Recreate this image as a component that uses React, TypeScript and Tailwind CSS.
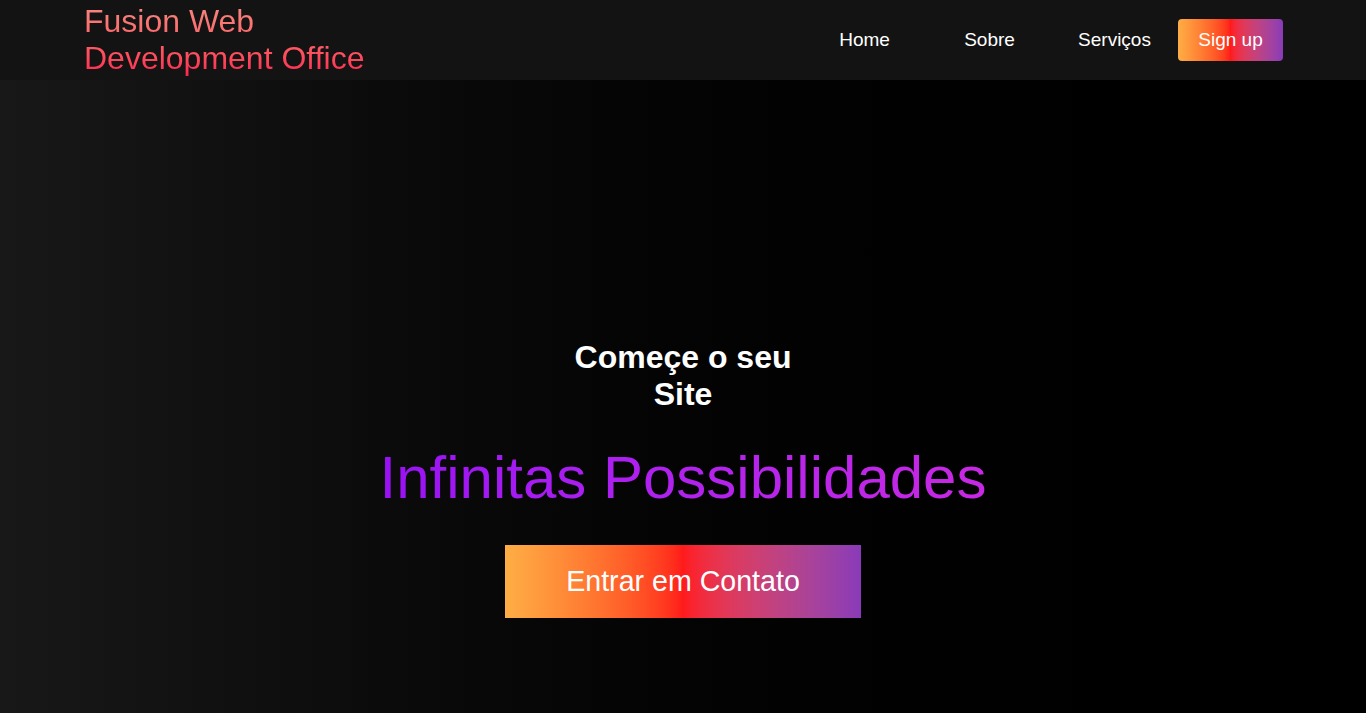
const font = { fontFamily: '"Liberation Sans", Arial, sans-serif' };

const links = ['Home', 'Sobre', 'Serviços'];

export default function App() {
  return (
    <div className="min-h-screen bg-black" style={font}>
      <header className="flex h-20 items-center justify-between bg-[#131313] pl-[84px] pr-[83px]">
        <h1 className="bg-gradient-to-b from-[#f58a80] to-[#ff1f4f] bg-clip-text text-[32px] leading-[37px] font-normal text-transparent">
          Fusion Web
          <br />
          Development Office
        </h1>
        <nav className="flex items-center">
          {links.map((l) => (
            <a key={l} href="#" className="w-[125px] text-center text-[19px] text-white">
              {l}
            </a>
          ))}
          <button className="ml-px h-[42px] w-[105px] rounded-[4px] bg-gradient-to-r from-[#fdae45] via-[#ff1a1a] to-[#8a3ab9] text-[19px] text-white">
            Sign up
          </button>
        </nav>
      </header>

      <main className="flex min-h-[633px] flex-col items-center bg-gradient-to-r from-[#181818] to-[#000000] pt-[259px]">
        <h2 className="w-[240px] text-center text-[32px] leading-[37px] font-bold text-white">
          Começe o seu Site
        </h2>
        <p className="mt-[30px] bg-gradient-to-r from-[#9a10f6] to-[#c828e4] bg-clip-text text-[60px] leading-[69px] text-transparent">
          Infinitas Possibilidades
        </p>
        <button className="mt-[33px] flex h-[73px] w-[356px] items-center justify-center bg-gradient-to-r from-[#fdae45] via-[#ff1a1a] to-[#8a3ab9] text-[28.6px] text-white">
          Entrar em Contato
        </button>
      </main>
    </div>
  );
}
